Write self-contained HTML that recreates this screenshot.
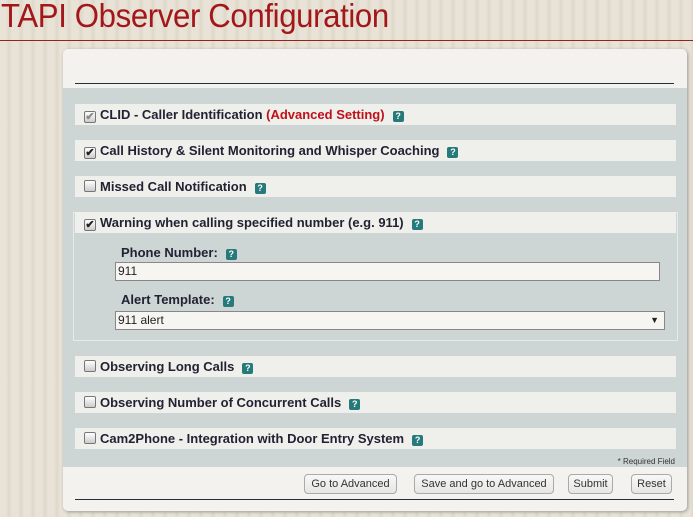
<!DOCTYPE html>
<html><head><meta charset="utf-8"><style>
*{margin:0;padding:0;box-sizing:border-box}
body{width:693px;height:517px;overflow:hidden;font-family:"Liberation Sans",Arial,sans-serif;
background:repeating-linear-gradient(90deg,#e8e3d6 0,#e8e3d6 6px,#ddd8c8 9px,#e8e3d6 12px);position:relative}
.title{position:absolute;left:1px;top:-3px;font-size:33px;color:#a3161a;letter-spacing:-0.4px;transform:scaleX(0.945);transform-origin:left}
.rline{position:absolute;left:0;right:0;top:40px;height:1px;background:#9a2020}
.panel{position:absolute;left:63px;top:49px;width:624px;height:462px;background:#f3f2ef;border-radius:5px;box-shadow:1px 1px 3px #999}
.hline{position:absolute;left:12px;width:599px;height:1px;background:#233}
.gray{position:absolute;left:0;top:39px;width:624px;height:379px;background:#cdd5d5}
.row{position:absolute;left:12px;width:601px;height:21px;background:#efefec;font-size:13px;font-weight:bold;color:#223;line-height:21px;padding-left:9px}
.cb{display:inline-block;width:12px;height:12px;border:1px solid #777;border-radius:2px;background:linear-gradient(#fff,#ccc);vertical-align:-1px;margin-right:4px;position:relative;font-size:11px;line-height:10px;text-align:center;color:#222}
.q{display:inline-block;width:11px;height:11px;background:#267a7a;border-radius:2px;color:#fff;font-size:9px;line-height:11px;text-align:center;margin-left:8px;vertical-align:0px}
.box{position:absolute;left:10px;top:163px;width:605px;height:129px;border:1px solid #e6eaea;background:#cdd5d5}
.lbl{position:absolute;font-size:13px;font-weight:bold;color:#223}
.inp{position:absolute;left:52px;width:545px;height:19px;border:1px solid #888;background:#f6f5f2;font-size:12px;line-height:17px;padding-left:2px;color:#222}
.btn{position:absolute;top:425px;height:20px;border:1px solid #aaa;border-radius:4px;background:linear-gradient(#f8f8f6,#e6e6e2);font-size:11px;color:#333;line-height:18px;text-align:center}
</style></head><body>
<div class="title">TAPI Observer Configuration</div>
<div class="rline"></div>
<div class="panel">
<div class="hline" style="top:34px"></div>
<div class="gray"></div>
<div class="row" style="top:55px"><span class="cb" style="color:#888">✔</span>CLID - Caller Identification <span style="color:#c0101a">(Advanced Setting)</span><span class="q">?</span></div>
<div class="row" style="top:91px"><span class="cb">✔</span>Call History &amp; Silent Monitoring and Whisper Coaching<span class="q">?</span></div>
<div class="row" style="top:127px"><span class="cb"></span>Missed Call Notification<span class="q">?</span></div>
<div class="box"></div>
<div class="row" style="top:163px"><span class="cb">✔</span>Warning when calling specified number (e.g. 911)<span class="q">?</span></div>
<div class="lbl" style="left:58px;top:196px">Phone Number:<span class="q">?</span></div>
<div class="inp" style="top:213px">911</div>
<div class="lbl" style="left:58px;top:243px">Alert Template:<span class="q">?</span></div>
<div class="inp" style="top:262px;left:52px;width:550px">911 alert<span style="position:absolute;right:5px;font-size:9px">▼</span></div>
<div class="row" style="top:307px"><span class="cb"></span>Observing Long Calls<span class="q">?</span></div>
<div class="row" style="top:343px"><span class="cb"></span>Observing Number of Concurrent Calls<span class="q">?</span></div>
<div class="row" style="top:379px"><span class="cb"></span>Cam2Phone - Integration with Door Entry System<span class="q">?</span></div>
<div style="position:absolute;right:12px;top:408px;font-size:8px;color:#333">* Required Field</div>
<div class="btn" style="left:241px;width:93px">Go to Advanced</div>
<div class="btn" style="left:351px;width:140px">Save and go to Advanced</div>
<div class="btn" style="left:505px;width:45px">Submit</div>
<div class="btn" style="left:568px;width:41px">Reset</div>
<div class="hline" style="top:450px"></div>
</div>
</body></html>
